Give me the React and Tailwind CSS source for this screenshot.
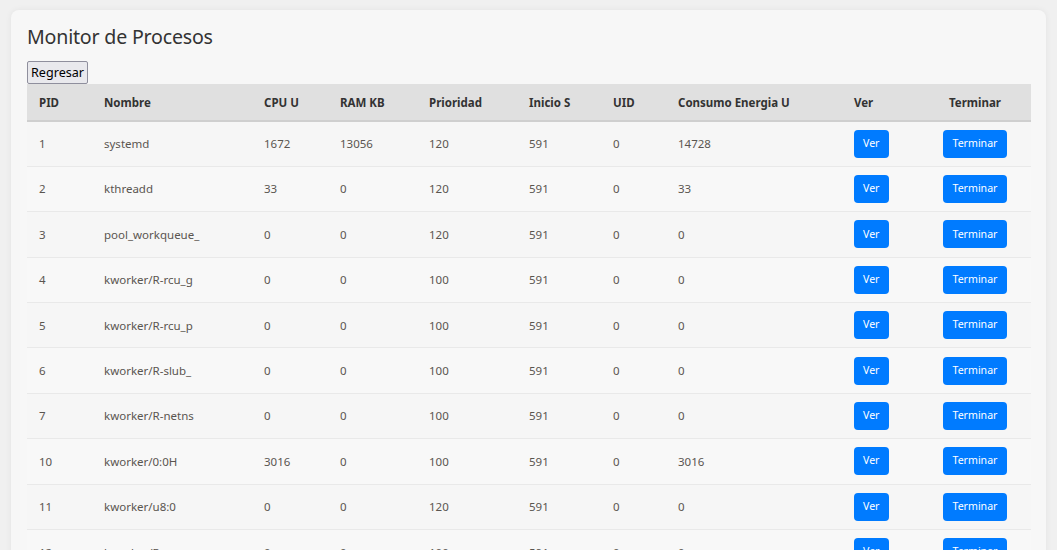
import React from "react";

const rows = [
  ["1", "systemd", "1672", "13056", "120", "591", "0", "14728"],
  ["2", "kthreadd", "33", "0", "120", "591", "0", "33"],
  ["3", "pool_workqueue_", "0", "0", "120", "591", "0", "0"],
  ["4", "kworker/R-rcu_g", "0", "0", "100", "591", "0", "0"],
  ["5", "kworker/R-rcu_p", "0", "0", "100", "591", "0", "0"],
  ["6", "kworker/R-slub_", "0", "0", "100", "591", "0", "0"],
  ["7", "kworker/R-netns", "0", "0", "100", "591", "0", "0"],
  ["10", "kworker/0:0H", "3016", "0", "100", "591", "0", "3016"],
  ["11", "kworker/u8:0", "0", "0", "120", "591", "0", "0"],
  ["12", "kworker/R-mm_pe", "0", "0", "100", "591", "0", "0"],
];

const headers = ["PID", "Nombre", "CPU U", "RAM KB", "Prioridad", "Inicio S", "UID", "Consumo Energia U"];

export default function App() {
  return (
    <div
      className="h-[550px] overflow-hidden bg-[#f0f0f0] pt-[10px] px-[11px]"
      style={{ fontFamily: '"Noto Sans", "Open Sans", sans-serif' }}
    >
      <div className="bg-[#f7f7f7] rounded-[8px] shadow-[0_0_6px_rgba(0,0,0,0.06)] px-4 pt-[14px] pb-4">
        <h1 className="text-[19.6px] leading-[26px] text-[#333] mb-[11px] tracking-[-0.2px]">Monitor de Procesos</h1>
        <button className="block bg-[#e9e9ed] border border-[#8f8f9d] rounded-[2px] px-[3px] h-[23px] text-[12.6px] leading-[21px] text-black">
          Regresar
        </button>
        <table className="table-fixed w-full border-collapse text-[11.5px]">
          <colgroup>
            <col className="w-[65px]" />
            <col className="w-[160px]" />
            <col className="w-[76px]" />
            <col className="w-[89px]" />
            <col className="w-[100px]" />
            <col className="w-[84px]" />
            <col className="w-[65px]" />
            <col className="w-[176px]" />
            <col className="w-[77px]" />
            <col className="w-[112px]" />
          </colgroup>
          <thead>
            <tr className="bg-[#e0e0e0] border-b-2 border-[#cfcfcf]">
              {headers.map((h) => (
                <th key={h} className="text-left font-bold text-[#333] px-3 pt-[1px] h-[37px] whitespace-nowrap">
                  {h}
                </th>
              ))}
              <th className="text-left font-bold text-[#333] px-3 pt-[1px]">Ver</th>
              <th className="text-center font-bold text-[#333] px-3 pt-[1px]">Terminar</th>
            </tr>
          </thead>
          <tbody>
            {rows.map((r, i) => (
              <tr
                key={r[0]}
                className={`border-b border-[#e9e9e9] ${i % 2 === 0 ? "bg-[#f6f6f6]" : "bg-[#f8f8f8]"}`}
              >
                {r.map((c, j) => (
                  <td key={j} className="px-3 h-[45.4px] text-[#5a5550] whitespace-nowrap">
                    {c}
                  </td>
                ))}
                <td className="px-3">
                  <button className="bg-[#007bff] text-white rounded-[4px] h-[28px] px-[9px] text-[10.6px]">
                    Ver
                  </button>
                </td>
                <td className="px-3 text-center">
                  <button className="bg-[#007bff] text-white rounded-[4px] h-[28px] px-[9px] text-[10.6px]">
                    Terminar
                  </button>
                </td>
              </tr>
            ))}
          </tbody>
        </table>
      </div>
    </div>
  );
}
